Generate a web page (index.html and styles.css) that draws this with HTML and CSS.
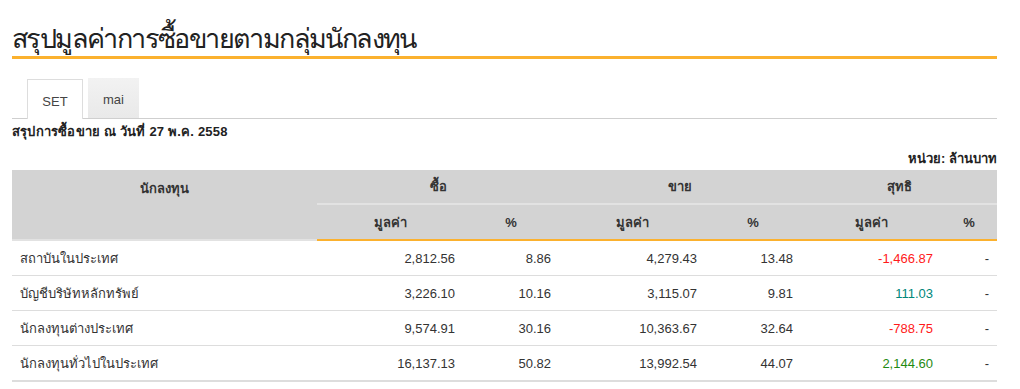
FILE: index.html
```html
<!DOCTYPE html>
<html lang="th">
<head>
<meta charset="utf-8">
<link rel="stylesheet" href="styles.css">
</head>
<body>
<div class="page">
  <h1 class="title">สรุปมูลค่าการซื้อขายตามกลุ่มนักลงทุน</h1>
  <div class="tabs">
    <div class="tab active">SET</div>
    <div class="tab">mai</div>
  </div>
  <div class="subtitle">สรุปการซื้อขาย ณ วันที่ 27 พ.ค. 2558</div>
  <div class="unit">หน่วย: ล้านบาท</div>
  <table class="data">
    <colgroup>
      <col class="c0"><col class="c1"><col class="c2"><col class="c3"><col class="c4"><col class="c5"><col class="c6">
    </colgroup>
    <thead>
      <tr class="h1">
        <th rowspan="2" class="inv">นักลงทุน</th>
        <th colspan="2">ซื้อ</th>
        <th colspan="2">ขาย</th>
        <th colspan="2">สุทธิ</th>
      </tr>
      <tr class="h2">
        <th>มูลค่า</th><th>%</th><th>มูลค่า</th><th>%</th><th>มูลค่า</th><th>%</th>
      </tr>
    </thead>
    <tbody>
      <tr><td>สถาบันในประเทศ</td><td>2,812.56</td><td>8.86</td><td>4,279.43</td><td>13.48</td><td class="neg">-1,466.87</td><td>-</td></tr>
      <tr><td>บัญชีบริษัทหลักทรัพย์</td><td>3,226.10</td><td>10.16</td><td>3,115.07</td><td>9.81</td><td class="pos1">111.03</td><td>-</td></tr>
      <tr><td>นักลงทุนต่างประเทศ</td><td>9,574.91</td><td>30.16</td><td>10,363.67</td><td>32.64</td><td class="neg">-788.75</td><td>-</td></tr>
      <tr><td>นักลงทุนทั่วไปในประเทศ</td><td>16,137.13</td><td>50.82</td><td>13,992.54</td><td>44.07</td><td class="pos2">2,144.60</td><td>-</td></tr>
    </tbody>
  </table>
</div>
</body>
</html>
```

FILE: styles.css
```css
html, body {
  margin: 0;
  padding: 0;
  background: #fff;
}
body {
  font-family: "Liberation Sans", Arial, sans-serif;
  color: #333;
  font-size: 13px;
}
.page {
  width: 985px;
  padding: 0 0 0 12px;
}
.title {
  margin: 0;
  padding-top: 22px;
  height: 34px;
  font-family: "Noto Sans", "Open Sans", sans-serif;
  font-weight: 400;
  font-size: 27px;
  letter-spacing: -1.6px;
  line-height: 32px;
  color: #222;
  border-bottom: 3px solid #fbb12e;
}
.tabs {
  display: flex;
  margin-top: 19px;
  padding-left: 15px;
  gap: 5px;
  border-bottom: 1px solid #cfcfcf;
  height: 40px;
  align-items: flex-end;
}
.tab {
  height: 40px;
  line-height: 44px;
  text-align: center;
  font-size: 13px;
  color: #444;
  box-sizing: border-box;
}
.tab.active {
  width: 56px;
  height: 40px;
  margin-bottom: -1px;
  background: #fff;
  border: 1px solid #ddd;
  border-bottom: none;
}
.tab:not(.active) {
  width: 51px;
  background: linear-gradient(#f2f2f2, #e9e9e9);
  line-height: 43px;
  height: 40px;
}
.subtitle {
  font-weight: bold;
  font-size: 13px;
  margin-top: 5px;
  line-height: 16px;
  color: #222;
  letter-spacing: 0.2px;
}
.unit {
  text-align: right;
  font-weight: bold;
  font-size: 13px;
  line-height: 16px;
  margin-top: 11px;
  color: #222;
}
.data {
  width: 985px;
  border-collapse: collapse;
  table-layout: fixed;
  margin-top: 3px;
}
.c0 { width: 305px; }
.c1 { width: 146px; }
.c2 { width: 96px; }
.c3 { width: 146px; }
.c4 { width: 96px; }
.c5 { width: 140px; }
.c6 { width: 56px; }
.data th {
  background: #d3d3d3;
  font-weight: bold;
  font-size: 13px;
  color: #333;
  text-align: center;
  padding: 0;
}
.h1 th {
  height: 33px;
  vertical-align: middle;
  border-bottom: 2px solid #e2e2e2;
}
.h1 th.inv {
  vertical-align: top;
  padding-top: 8px;
  border-bottom: 2px solid #e2e2e2;
}
.h2 th {
  height: 34px;
  border-bottom: 2px solid #fbb12e;
}
.data td {
  height: 34px;
  padding: 0 8px;
  text-align: right;
  border-bottom: 1px solid #ddd;
  color: #333;
  font-size: 13px;
}
.data td:first-child {
  text-align: left;
  padding-left: 8px;
}
.data tbody tr:last-child td {
  border-bottom: 2px solid #ddd;
}
.data td.neg { color: #ff1a1a; }
.data td.pos1 { color: #00877a; }
.data td.pos2 { color: #1f8a12; }
```
